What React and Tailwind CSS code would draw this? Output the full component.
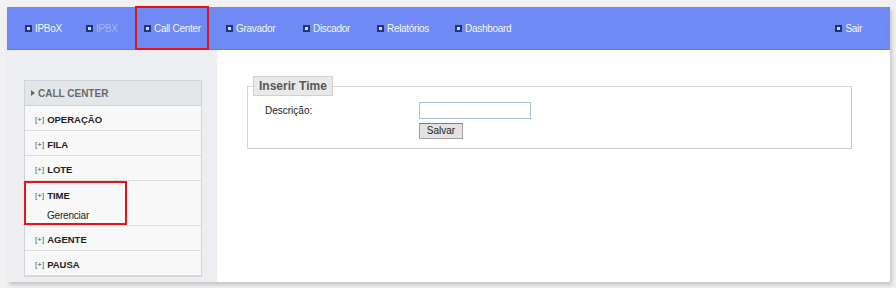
import React from 'react';

const navItems = [
  { label: 'IPBoX', width: 'w-[61px]' },
  { label: 'IPBX', width: 'w-[58px]', disabled: true },
  { label: 'Call Center', width: 'w-[82px]', marked: true },
  { label: 'Gravador', width: 'w-[77px]' },
  { label: 'Discador', width: 'w-[74px]' },
  { label: 'Relatórios', width: 'w-[78px]' },
  { label: 'Dashboard', width: 'w-[80px]' },
];

const menuRows = ['OPERAÇÃO', 'FILA', 'LOTE'];
const menuRowsAfter = ['AGENTE', 'PAUSA'];

function Bullet() {
  return <span className="w-[7px] h-[7px] shrink-0 bg-[#bfe4ee] border-2 border-[#22357a]" />;
}

function NavItem({ label, width, disabled, marked }) {
  return (
    <div className={`relative self-stretch flex items-center gap-[3px] ${width}`}>
      <Bullet />
      <span className={`tracking-[-0.3px] ${disabled ? 'text-[#aab6ee]' : 'text-[#f4f6ff]'}`}>{label}</span>
      {marked && (
        <div className="absolute -left-[9px] -top-[1px] -bottom-[1px] w-[74px] border-2 border-[#e2141c]" />
      )}
    </div>
  );
}

function MenuRow({ label }) {
  return (
    <div className="h-[25px] flex items-center pl-[10px] pt-[4px] border-b border-[#dcdcdc]">
      <span className="text-[8px] text-[#555] mr-[3px]">[+]</span>
      <span className="text-[9.5px] font-bold text-[#1e1e1e]">{label}</span>
    </div>
  );
}

export default function App() {
  return (
    <div
      className="w-[896px] h-[288px] bg-[#f1f1f1] pt-[7px] pl-[7px] overflow-hidden"
      style={{ fontFamily: '"Liberation Sans", Arial, sans-serif' }}
    >
      <div className="w-[883px] h-[275px] bg-white flex flex-col shadow-[2px_3px_4px_rgba(0,0,0,0.18)]">
        {/* Top bar */}
        <nav className="h-[43px] bg-[#6f8af4] border-b border-[#6379dc] flex items-center pl-[18px] pr-[28px] text-[10px]">
          {navItems.map((item) => (
            <NavItem key={item.label} {...item} />
          ))}
          <div className="ml-auto flex items-center gap-[3px]">
            <Bullet />
            <span className="text-[#f4f6ff] tracking-[-0.3px]">Sair</span>
          </div>
        </nav>

        <div className="flex flex-1">
          {/* Sidebar */}
          <aside className="w-[210px] bg-[#eceef1] pt-[30px] pl-[17px]">
            <div className="w-[178px] border border-[#d2d4d7] bg-[#f8f8f8]">
              <div className="h-[25px] flex items-center pl-[6px] bg-[#e4e7ea] border-b border-[#d0d3d6]">
                <span className="w-0 h-0 border-y-[3px] border-y-transparent border-l-[4px] border-l-[#666] mr-[3px]" />
                <span className="text-[10px] font-bold text-[#6a6a6a]">CALL CENTER</span>
              </div>
              {menuRows.map((r) => (
                <MenuRow key={r} label={r} />
              ))}
              <div className="relative h-[45px] border-b border-[#dcdcdc] pl-[10px] pt-[8px]">
                <div className="flex items-center">
                  <span className="text-[8px] text-[#555] mr-[3px]">[+]</span>
                  <span className="text-[9.5px] font-bold text-[#1e1e1e]">TIME</span>
                </div>
                <div className="pl-[12px] pt-[5px] text-[10px] text-[#222] tracking-[-0.2px]">Gerenciar</div>
                <div className="absolute -left-[1px] top-0 w-[103px] h-[44px] border-2 border-[#e2141c]" />
              </div>
              {menuRowsAfter.map((r) => (
                <MenuRow key={r} label={r} />
              ))}
            </div>
          </aside>

          {/* Main */}
          <main className="flex-1 pl-[30px] pt-[26px]">
            <fieldset className="w-[605px] border border-[#d6d6d6] border-r-[#c9c9c9] border-b-[#c9c9c9] px-[5px] pb-[9px]">
              <legend className="h-[20px] px-[5px] flex items-center bg-[#e9e9e9] border border-[#d0d0d0] text-[12px] font-bold text-[#565656]">
                Inserir Time
              </legend>
              <div className="grid grid-cols-[154px_1fr] pl-[12px] pt-[6px] text-[10px] text-[#222]">
                <div className="h-[17px] flex items-center">Descrição:</div>
                <input className="w-[112px] h-[17px] border border-[#a9bfd6] bg-white outline-none" />
                <div />
                <button className="mt-[4px] w-[44px] h-[16px] bg-[#e3e3e3] border border-[#a0a0a0] border-t-[#7d7d7d] text-[10px] text-[#222] leading-none">
                  Salvar
                </button>
              </div>
            </fieldset>
          </main>
        </div>
      </div>
    </div>
  );
}
